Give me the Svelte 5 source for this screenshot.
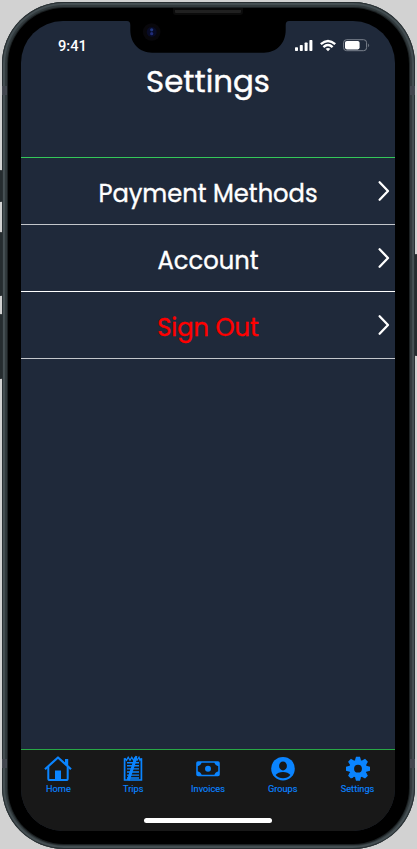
<script>
  const rows = [
    { label: 'Payment Methods', cls: 'payment' },
    { label: 'Account', cls: 'account' },
    { label: 'Sign Out', cls: 'danger' }
  ];
  const tabs = ['Home', 'Trips', 'Invoices', 'Groups', 'Settings'];
</script>

<div class="stage">
  <i class="key k1"></i><i class="key k2"></i><i class="key k3"></i><i class="key k4"></i>
  <div class="metal">
    <i class="band b1"></i><i class="band b2"></i><i class="band b3"></i><i class="band b4"></i>
    <div class="bezel">
      <div class="screen">
        <header>
          <div class="status">
            <span class="time">9:41</span>
            <svg width="76" height="14" viewBox="0 0 76 14">
              <g fill="#fff">
                <rect x="0" y="8.2" width="3" height="3.8" rx=".7" />
                <rect x="4.8" y="6" width="3" height="6" rx=".7" />
                <rect x="9.6" y="3.5" width="3" height="8.5" rx=".7" />
                <rect x="14.4" y="1" width="3" height="11" rx=".7" />
              </g>
              <g fill="none" stroke="#fff" stroke-width="2.4">
                <path d="M25.8 5.2Q33 -1.2 40.2 5.2" />
                <path d="M28.4 8.2Q33 4 37.6 8.2" />
              </g>
              <path d="M30.6 9.8Q33 8 35.4 9.8L33 12.2Z" fill="#fff" />
              <rect x="48.6" y=".7" width="23" height="11" rx="3" fill="none" stroke="#7b828d" stroke-width="1" />
              <rect x="50" y="2" width="14.6" height="8.4" rx="1.8" fill="#fff" />
              <path d="M73.2 4.5q2 1.8 0 3.7z" fill="#7b828d" />
            </svg>
          </div>
          <h1>Settings</h1>
        </header>
        <main>
          {#each rows as row}
            <div class="row {row.cls}">
              <span>{row.label}</span>
              <svg width="14" height="22" viewBox="0 0 14 22"><path d="M2.6 2.3 11 11 2.6 19.7" fill="none" stroke="#fff" stroke-width="2.3" stroke-linecap="round" stroke-linejoin="round" /></svg>
            </div>
          {/each}
        </main>
        <nav>
          {#each tabs as tab, i}
            <div class="tab">
              <svg width="28" height="28" viewBox="0 0 28 28">
                {#if i === 0}
                  <g fill="none" stroke="#0a84ff" stroke-width="2" stroke-linejoin="round">
                    <path d="M1 14.2 14 2.5 27 14.2" stroke-width="2.2" />
                    <path d="M4.3 12V23.4Q4.3 25 5.9 25H22.1Q23.7 25 23.7 23.4V12" />
                  </g>
                  <path d="M21 4h3.2v8L21 9zM11 15.5h6V25h-6z" fill="#0a84ff" />
                {:else if i === 1}
                  <g fill="none" stroke="#0a84ff">
                    <path d="M5.6 3.2V25H22.4V3.2" stroke-width="1.7" />
                    <path d="M5.6 3.3 7.5 5.3 9.2 2.2 11 5.3 12.8 2.2 14.5 5.3 16.3 2.2 18 5.3 20 2.2 21 5.3 22.4 3.3" stroke-width="1.3" />
                    <path d="M8 7.7h12M8 10.8h12M8 13.9h12M8 17h12M8 20.1h12M8 23h12" stroke-width="1.4" />
                    <path d="M16.8 2.8 9.3 25.2" stroke-width="3" />
                    <path d="m17.4 1-1 4" stroke-width="2" />
                  </g>
                {:else if i === 2}
                  <rect x="3" y="7" width="22" height="13.5" rx="1" fill="none" stroke="#0a84ff" stroke-width="1.6" />
                  <path d="M3 7h4.7Q7.4 10.5 3 11.3zM25 7h-4.7q.3 3.5 4.7 4.3zM3 20.5h4.7q-.3-3.5-4.7-4.3zM25 20.5h-4.7q.3-3.5 4.7-4.3z" fill="#0a84ff" />
                  <circle cx="14" cy="13.8" r="3" fill="#0a84ff" />
                {:else if i === 3}
                  <circle cx="14" cy="13.7" r="11.8" fill="#0a84ff" />
                  <ellipse cx="14" cy="10.9" rx="3.9" ry="4.5" fill="#181818" />
                  <path d="M6.6 20.1Q9 17.1 14 17.1T21.4 20.1Q18.4 23.3 14 23.3T6.6 20.1Z" fill="#181818" />
                {:else}
                  <g fill="#0a84ff">
                    {#each [0, 45, 90, 135] as a}
                      <path d="M11.2 4.5 12 1.7H16L16.8 4.5V23L16 25.7H12L11.2 23Z" transform="rotate({a} 14 13.7)" />
                    {/each}
                    <circle cx="14" cy="13.7" r="9" />
                  </g>
                  <circle cx="14" cy="13.7" r="3.9" fill="#181818" />
                {/if}
              </svg>
              <span>{tab}</span>
            </div>
          {/each}
          <i class="home"></i>
        </nav>
      </div>
    </div>
  </div>
  <svg class="notch" width="163" height="35" viewBox="0 0 163 35">
    <path d="M0 0H162V1Q158.7 1 158.7 5V10C158.7 24 149 32.7 137 32.7H25C13 32.7 3.3 24 3.3 10V5Q3.3 1 0 1Z" fill="#000" />
    <circle cx="24.7" cy="12" r="8.8" fill="#08070b" />
    <circle cx="24.7" cy="12" r="5" fill="#080b26" />
    <circle cx="24.7" cy="9.8" r="1.6" fill="#20377e" /><circle cx="24.7" cy="13.7" r="1.6" fill="#202c78" />
  </svg>
  <i class="speaker"></i>
</div>

<style>
  :global(body) { margin: 0; background: #d2d2d2; }
  .stage { position: relative; width: 417px; height: 849px; overflow: hidden; background: #d2d2d2; font-family: Roboto, sans-serif; }
  .metal { position: relative; box-sizing: border-box; width: 413px; height: 847px; margin: 2px 0 0 2px; padding: 6px; border-radius: 62px; background: #30383b; box-shadow: inset 0 0 0 1px #293033, inset 0 0 1px 3px #465054; overflow: hidden; }
  .bezel { box-sizing: border-box; width: 401px; height: 836px; padding: 13px 14px 13px 13px; border-radius: 56px; background: #000; box-shadow: 0 0 0 1px #1b2022; }
  .screen { width: 374px; height: 810px; display: flex; flex-direction: column; border-radius: 42px; overflow: hidden; background: #1f293a; }
  header { height: 136px; box-sizing: border-box; color: #fff; }
  .status { display: flex; justify-content: space-between; align-items: center; height: 20px; padding: 15px 24px 0 37px; }
  .time { font-size: 14.7px; line-height: 20px; font-weight: 500; }
  .status svg { margin-top: -1px; }
  h1 { margin: 6px 0 0; text-align: center; font: 400 30.8px/40px Poppins, Inter, sans-serif; -webkit-text-stroke: .4px currentColor; }
  main { flex: 1; }
  .row { display: flex; align-items: center; box-sizing: border-box; height: 67px; border-top: 1px solid #fff; padding: 5px 4px 0 0; color: #fff; font: 400 24.2px/36px Poppins, Inter, sans-serif; }
  .row span { flex: 1; text-align: center; padding-left: 18px; -webkit-text-stroke: .35px currentColor; }
  .row svg { margin-top: -6px; }
  .payment { border-top-color: #34c759; }
  .account { border-top-color: #c3c6cb; }
  .danger { height: 68px; border-bottom: 1px solid #c3c6cb; }
  .danger span { color: #f00; }
  nav { position: relative; display: flex; box-sizing: border-box; height: 82px; padding-top: 5px; background: #181818; border-top: 1px solid #28a745; }
  .tab { flex: 1; display: flex; flex-direction: column; align-items: center; color: #0a84ff; font-size: 9.2px; line-height: 12px; }
  .tab span { -webkit-text-stroke: .15px currentColor; }
  .home { position: absolute; left: 123px; top: 68px; width: 128px; height: 5px; border-radius: 3px; background: #fff; }
  .notch { position: absolute; left: 127px; top: 20px; }
  .speaker { position: absolute; left: 173px; top: 8px; width: 70px; height: 7px; box-sizing: border-box; border: 2px solid #0b0b0b; border-radius: 0 0 3px 3px; background: #202020; }
  .key { position: absolute; width: 4px; background: #252c2f; border-radius: 2px; }
  .k1 { left: -1px; top: 170px; height: 32px; }
  .k2 { left: -1px; top: 232px; height: 64px; }
  .k3 { left: -1px; top: 314px; height: 65px; }
  .k4 { right: -1px; top: 254px; height: 102px; }
  .band { position: absolute; background: #43474f; }
  .b1 { left: 0; top: 84px; width: 5px; height: 9px; }
  .b2 { right: 0; top: 84px; width: 5px; height: 9px; }
  .b3 { left: 0; top: 757px; width: 5px; height: 9px; }
  .b4 { right: 0; top: 757px; width: 5px; height: 9px; }
</style>
